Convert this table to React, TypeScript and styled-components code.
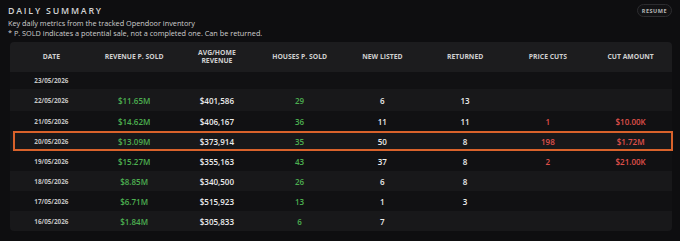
import React from 'react';
import styled, { createGlobalStyle } from 'styled-components';

interface DayRow {
  date: string;
  revenue?: string;
  avg?: string;
  sold?: string;
  listed?: string;
  returned?: string;
  cuts?: string;
  cutAmount?: string;
  highlight?: boolean;
}

const rows: DayRow[] = [
  { date: '23/05/2026' },
  { date: '22/05/2026', revenue: '$11.65M', avg: '$401,586', sold: '29', listed: '6', returned: '13' },
  { date: '21/05/2026', revenue: '$14.62M', avg: '$406,167', sold: '36', listed: '11', returned: '11', cuts: '1', cutAmount: '$10.00K' },
  { date: '20/05/2026', revenue: '$13.09M', avg: '$373,914', sold: '35', listed: '50', returned: '8', cuts: '198', cutAmount: '$1.72M', highlight: true },
  { date: '19/05/2026', revenue: '$15.27M', avg: '$355,163', sold: '43', listed: '37', returned: '8', cuts: '2', cutAmount: '$21.00K' },
  { date: '18/05/2026', revenue: '$8.85M', avg: '$340,500', sold: '26', listed: '6', returned: '8' },
  { date: '17/05/2026', revenue: '$6.71M', avg: '$515,923', sold: '13', listed: '1', returned: '3' },
  { date: '16/05/2026', revenue: '$1.84M', avg: '$305,833', sold: '6', listed: '7' },
];

const GlobalStyle = createGlobalStyle`
  body {
    margin: 0;
    background: #0e0e10;
    font-family: "Open Sans", "Noto Sans", sans-serif;
    color: #d6d6d6;
  }
`;

const Panel = styled.div`
  padding: 4px 8px 0 8px;
  width: 680px;
  box-sizing: border-box;
`;

const TopBar = styled.div`
  display: flex;
  justify-content: space-between;
  align-items: flex-start;
`;

const Title = styled.h2`
  margin: 1px 0 0 0;
  font-size: 8.8px;
  font-weight: 600;
  letter-spacing: 1.8px;
  color: #d4d4d4;
  line-height: 12px;
`;

const ResumeButton = styled.button`
  margin: 0;
  height: 13px;
  padding: 0 4px;
  border: 1px solid #2c2c2f;
  border-radius: 7px;
  background: #121214;
  color: #b8b8b8;
  font-family: "Open Sans", sans-serif;
  font-size: 5.5px;
  font-weight: 700;
  letter-spacing: 0.5px;
`;

const Notes = styled.div`
  margin-top: 2px;
`;

const Note = styled.p`
  margin: 0;
  font-size: 7.3px;
  line-height: 9.5px;
  color: #cfcfcf;
`;

const Table = styled.div`
  margin: 4px 0 0 2px;
  width: 662px;
`;

const Grid = styled.div`
  display: grid;
  grid-template-columns: repeat(8, 1fr);
  align-items: center;
`;

const HeadRow = styled(Grid)`
  height: 30px;
  background: #1c1c1e;
  border-radius: 4px 4px 0 0;
`;

const HeadCell = styled.div`
  text-align: center;
  font-size: 6.8px;
  font-weight: 700;
  line-height: 8.5px;
  color: #cfcfcf;
`;

const BodyRow = styled(Grid)<{ $striped: boolean; $highlight: boolean; $height: number; $last: boolean }>`
  position: relative;
  height: ${(p) => p.$height}px;
  background: ${(p) => (p.$striped ? '#18181a' : '#111113')};
  border-radius: ${(p) => (p.$last ? '0 0 4px 4px' : '0')};

  &::after {
    content: '';
    display: ${(p) => (p.$highlight ? 'block' : 'none')};
    position: absolute;
    left: 3px;
    right: -1px;
    top: 0;
    bottom: 0;
    border: 2px solid #d9622b;
    pointer-events: none;
  }
`;

const DateCell = styled.div`
  text-align: center;
  font-size: 6.3px;
  font-weight: 700;
  color: #c4c4c4;
`;

const ValueCell = styled.div<{ $tone?: 'green' | 'red' | 'white' }>`
  text-align: center;
  font-size: 8px;
  font-weight: 600;
  color: ${(p) => (p.$tone === 'green' ? '#4caf50' : p.$tone === 'red' ? '#e0504a' : '#ececec')};
`;

const heights = [17, 22, 20, 20, 20, 20, 20, 20];

const App: React.FC = () => {
  return (
    <>
      <GlobalStyle />
      <Panel>
        <TopBar>
          <Title>DAILY SUMMARY</Title>
          <ResumeButton>RESUME</ResumeButton>
        </TopBar>
        <Notes>
          <Note>Key daily metrics from the tracked Opendoor inventory</Note>
          <Note>* P. SOLD indicates a potential sale, not a completed one. Can be returned.</Note>
        </Notes>
        <Table>
          <HeadRow>
            <HeadCell>DATE</HeadCell>
            <HeadCell>REVENUE P. SOLD</HeadCell>
            <HeadCell>AVG/HOME<br />REVENUE</HeadCell>
            <HeadCell>HOUSES P. SOLD</HeadCell>
            <HeadCell>NEW LISTED</HeadCell>
            <HeadCell>RETURNED</HeadCell>
            <HeadCell>PRICE CUTS</HeadCell>
            <HeadCell>CUT AMOUNT</HeadCell>
          </HeadRow>
          {rows.map((row, index) => (
            <BodyRow
              key={row.date}
              $striped={index % 2 === 1}
              $highlight={!!row.highlight}
              $height={heights[index]}
              $last={index === rows.length - 1}
            >
              <DateCell>{row.date}</DateCell>
              <ValueCell $tone="green">{row.revenue}</ValueCell>
              <ValueCell>{row.avg}</ValueCell>
              <ValueCell $tone="green">{row.sold}</ValueCell>
              <ValueCell>{row.listed}</ValueCell>
              <ValueCell>{row.returned}</ValueCell>
              <ValueCell $tone="red">{row.cuts}</ValueCell>
              <ValueCell $tone="red">{row.cutAmount}</ValueCell>
            </BodyRow>
          ))}
        </Table>
      </Panel>
    </>
  );
};

export default App;
